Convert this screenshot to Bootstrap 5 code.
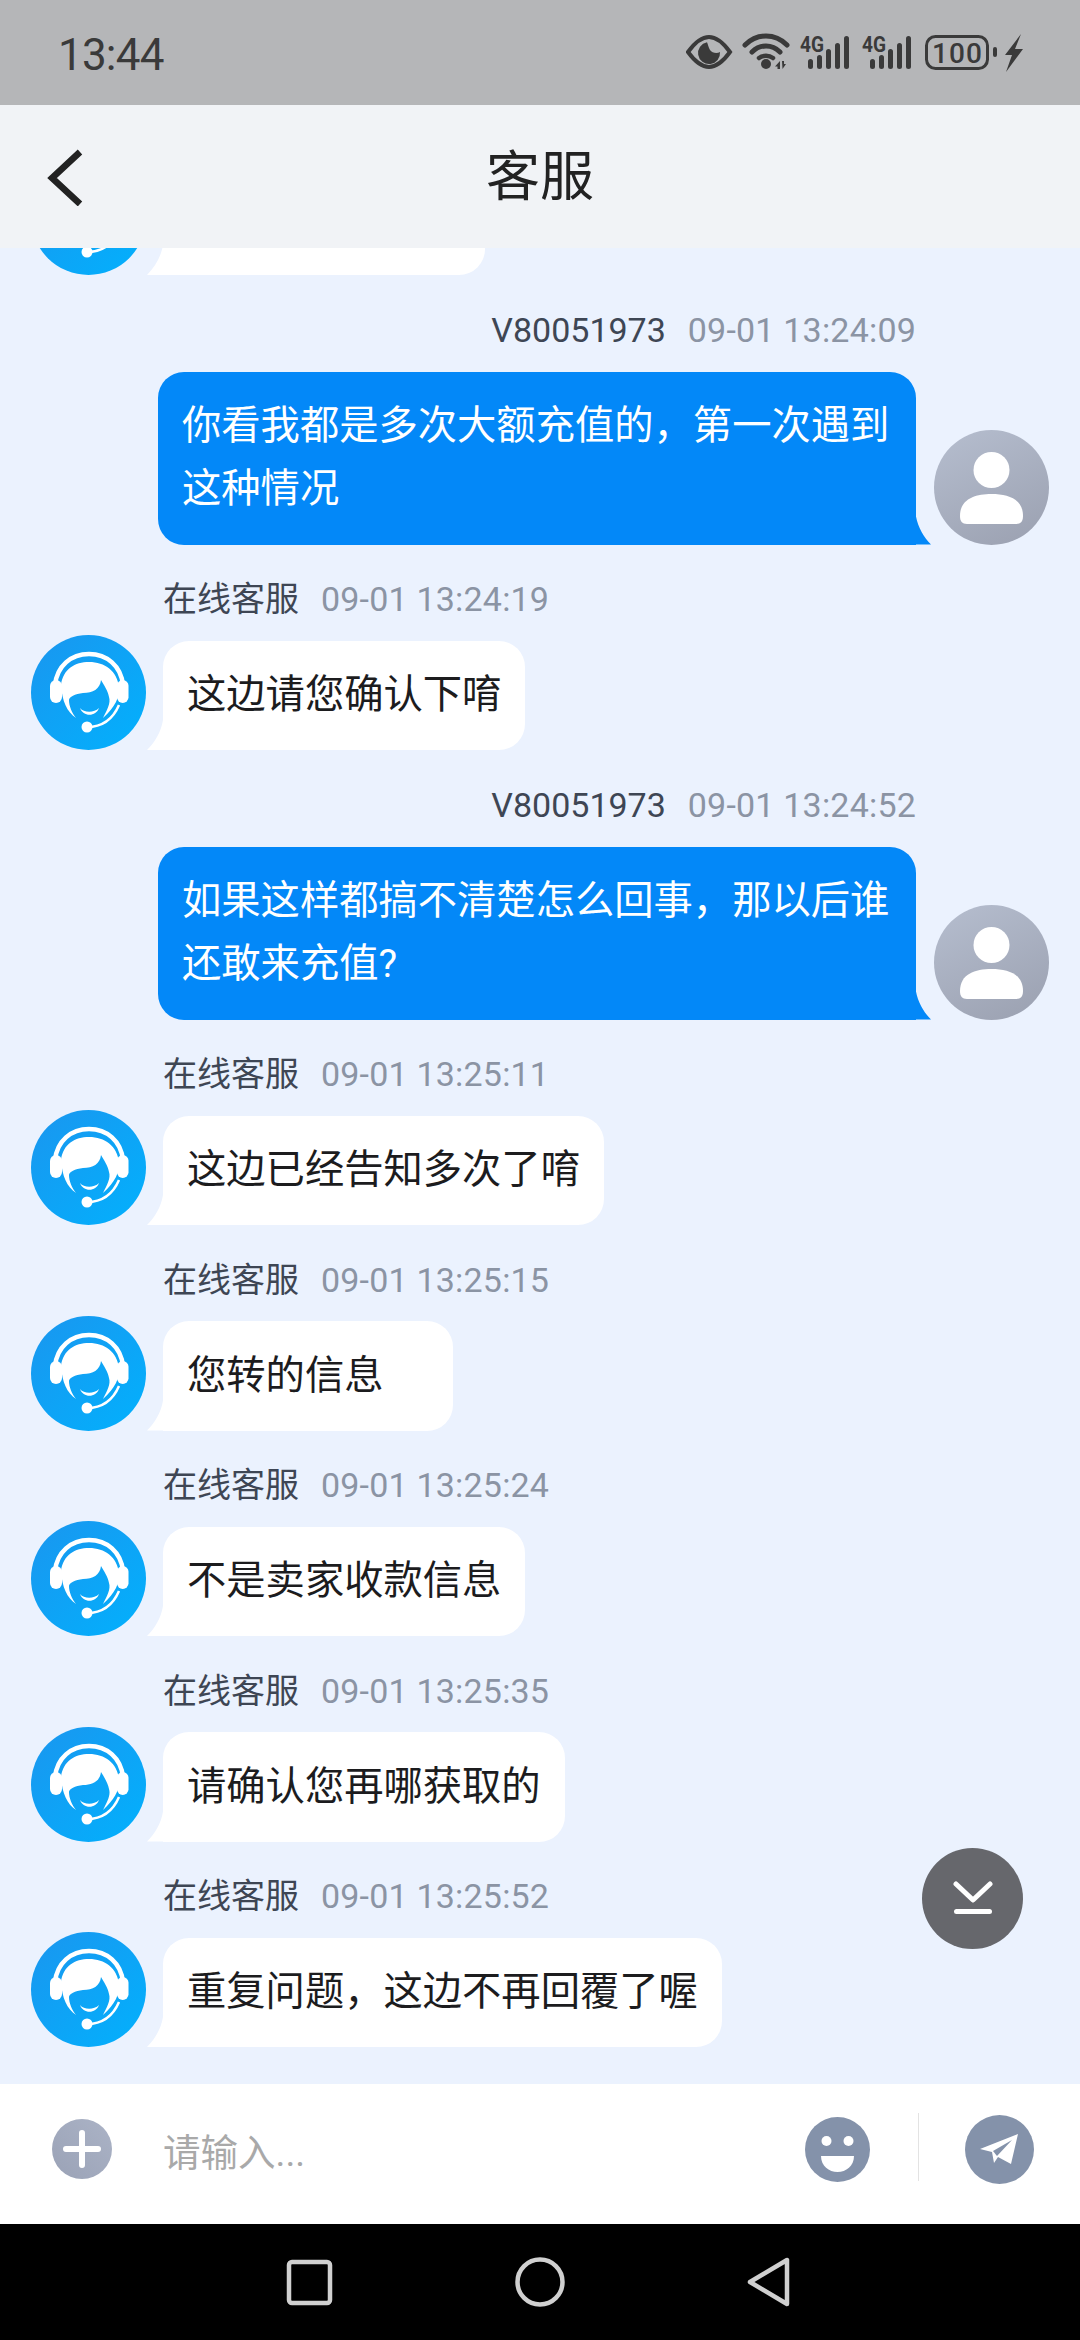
<!DOCTYPE html>
<html lang="zh">
<head>
<meta charset="utf-8">
<title>客服</title>
<link href="https://cdn.jsdelivr.net/npm/bootstrap@5.3.0/dist/css/bootstrap.min.css" rel="stylesheet">
<style>
:root{--cjk:Roboto,"Noto Sans CJK SC",sans-serif}
html,body{margin:0;padding:0}
body{width:1080px;height:2340px;overflow:hidden;font-family:var(--cjk);background:#ebf2fe}
.phone{width:1080px;height:2340px}
.sbar{height:105px;background:#b5b6b8;color:#3a3a3a;padding:0 54px 0 58px;flex:none}
.clock{font-size:44px;line-height:1;letter-spacing:-.8px;margin-top:4px}
.sicons{margin-top:1px}
.hdr{height:143px;background:#f1f3f6;flex:none;position:relative;z-index:2}
.hdr-title{font-size:54px;line-height:1;color:#222;font-weight:400;margin-top:2px}
.hdr-back{position:absolute;left:44px;top:41px}
.chat{flex:1 1 0;min-height:0;overflow:hidden;padding:0 31px 37px 31px;background:#ebf2fe}
.msgrow{margin-top:33.5px;flex:none}
.meta{font-size:34px;line-height:42px;height:42px;color:#3e4654;margin-bottom:15px;white-space:nowrap;padding-left:132px}
.meta .when{color:#8b94a4;margin-left:22px;letter-spacing:.2px}
.meta-out{text-align:right;padding-left:0;padding-right:133px;margin-bottom:21px}
.ava{width:115px;height:115px;flex:none;display:block}
.bub{font-size:39.3px;line-height:62.5px;position:relative;color:#1c1c1e;border-radius:26px;padding:23.5px 24px}
.bub-in{background:#fff;margin-left:17px;border-bottom-left-radius:0;white-space:nowrap}
.bub-in::before{content:"";position:absolute;left:-16px;bottom:0;width:16px;height:30px;background:#fff;clip-path:path("M16 0C14 12 8 22 0 30L16 30Z")}
.bub-gap{padding-right:70px}
.bub-clip{width:322px}
.bub-out{background:#0388f8;color:#fff;width:758px;margin-right:18px;border-bottom-right-radius:0;padding:23px 18px 24px 24px;line-height:63px}
.bub-out::after{content:"";position:absolute;right:-15px;bottom:0;width:15px;height:28px;background:#0388f8;clip-path:path("M0 0C2 11 8 21 15 28L0 28Z")}
.fab{position:absolute;right:57px;bottom:135px;width:101px;height:101px;border-radius:50%;background:#66676c;border:0;padding:0}
.composer{height:140px;background:#fff;flex:none;padding:0 46px 10px 52px}
.ph{font-size:37.5px;color:#a9a9a9;margin-left:51px;line-height:1;margin-top:10px}
.vsep{width:1px;height:68px;background:#e3e3e3;margin:-4px 46px 0 48px}
.navbarr{height:116px;background:#000;flex:none}
.navbarr svg{display:block}
</style>
</head>
<body>
<svg width="0" height="0" class="position-absolute">
  <defs>
    <linearGradient id="kfg" x1="0" y1="0" x2="1" y2="1"><stop offset="0" stop-color="#1a96ef"/><stop offset="1" stop-color="#02b1fd"/></linearGradient>
    <linearGradient id="ug" x1="0.2" y1="0" x2="0.7" y2="1"><stop offset="0" stop-color="#b4bccd"/><stop offset="1" stop-color="#9da3b3"/></linearGradient>
    <linearGradient id="pg" x1="1" y1="0" x2="0" y2="1"><stop offset="0" stop-color="#abb3c6"/><stop offset="1" stop-color="#9aa2b6"/></linearGradient>
    <symbol id="kf" viewBox="0 0 115 115">
      <circle cx="57.5" cy="57.5" r="57.5" fill="url(#kfg)"/>
      <path d="M24 50C26 31 40 19 58 19S90 31 92 50" fill="none" stroke="#fff" stroke-width="4.500"/>
      <rect x="19" y="45" width="12" height="23" rx="6" fill="#fff"/>
      <rect x="86" y="45" width="11.500" height="23" rx="5.750" fill="#fff"/>
      <path d="M30 50C32 34 44 27 58 27C74 27 86 36 88 52C89 62 84 72 72 83C76 75 80 68 78 62C77 56 73 50 70 45C69 54 62 58 52 58C44 59 38 62 38 65C38 71 41 78 45 83C36 77 31 66 30 50Z" fill="#fff"/>
      <path d="M49 73C53 78 63 78 68 73C65 82 52 82 49 73Z" fill="#fff"/>
      <path d="M56 92C72 92 82 84 88 70" fill="none" stroke="#fff" stroke-width="2.500"/>
      <circle cx="56" cy="92" r="5.500" fill="#fff"/>
    </symbol>
    <symbol id="me" viewBox="0 0 115 115">
      <circle cx="57.5" cy="57.5" r="57.5" fill="url(#ug)"/>
      <circle cx="57.500" cy="40" r="18" fill="#fff"/>
      <path d="M26 86C26 69 41 64 57.500 64S89 69 89 86C89 91 87 94 82 94H33C28 94 26 91 26 86Z" fill="#fff"/>
    </symbol>
  </defs>
</svg>

<div class="phone d-flex flex-column">
  <div class="sbar d-flex align-items-center justify-content-between">
    <span class="clock">13:44</span>
    <div class="sicons d-flex align-items-center">
      <svg width="340" height="40" viewBox="0 0 340 40" fill="#3a3a3a" font-family="Roboto,sans-serif" font-weight="700">
        <path d="M2 19C10 8 18 4 23 4S36 8 44 19C36 30 28 34 23 34S10 30 2 19Z" fill="none" stroke="#3a3a3a" stroke-width="4"/>
        <path d="M21 9.200A11 11 0 1 0 34 19C31 21 26 20 24 17C22.500 14.500 22 11 21 9.200Z"/>
        <path d="M59 12C71 0 89 0 101 12" fill="none" stroke="#3a3a3a" stroke-width="5" stroke-linecap="round"/>
        <path d="M66 19C74 11 86 11 94 19" fill="none" stroke="#3a3a3a" stroke-width="5" stroke-linecap="round"/>
        <path d="M73 25C77 22 83 22 87 25" fill="none" stroke="#3a3a3a" stroke-width="4.500" stroke-linecap="round"/>
        <circle cx="80" cy="31" r="5"/>
        <path d="M94 28L89 33.500H91.500V36H94ZM96 28H98V31H100L96.500 36Z"/>
        <text x="114" y="19" font-size="22" textLength="24" lengthAdjust="spacingAndGlyphs">4G</text>
        <rect x="122" y="26" width="5" height="10" rx="2.500"/><rect x="131" y="22" width="5" height="14" rx="2.500"/><rect x="140" y="16" width="5" height="20" rx="2.500"/><rect x="149" y="10" width="5" height="26" rx="2.500"/><rect x="158" y="3" width="5" height="33" rx="2.500"/>
        <text x="176" y="19" font-size="22" textLength="24" lengthAdjust="spacingAndGlyphs">4G</text>
        <rect x="184" y="26" width="5" height="10" rx="2.500"/><rect x="193" y="22" width="5" height="14" rx="2.500"/><rect x="202" y="16" width="5" height="20" rx="2.500"/><rect x="211" y="10" width="5" height="26" rx="2.500"/><rect x="220" y="3" width="5" height="33" rx="2.500"/>
        <rect x="240.500" y="3.500" width="61" height="32" rx="9" fill="none" stroke="#3a3a3a" stroke-width="3"/>
        <text x="271" y="29.500" font-size="28" font-weight="500" text-anchor="middle" textLength="50">100</text>
        <rect x="307" y="14" width="4" height="10" rx="2"/>
        <path d="M335 1L319 22H326L320 39L337 16H329Z"/>
      </svg>
    </div>
  </div>

  <div class="hdr d-flex align-items-center justify-content-center">
    <svg class="hdr-back" width="42" height="60" viewBox="0 0 42 60"><path d="M36 6L8 32L36 58" fill="none" stroke="#222" stroke-width="6.500"/></svg>
    <span class="hdr-title">客服</span>
  </div>

  <div class="chat position-relative d-flex flex-column justify-content-end">
    <div class="msgrow">
      <div class="d-flex align-items-end"><svg class="ava"><use href="#kf"/></svg><div class="bub bub-in bub-clip">&nbsp;</div></div></div>

    <div class="msgrow"><div class="meta meta-out">V80051973<span class="when">09-01 13:24:09</span></div>
      <div class="d-flex align-items-end justify-content-end"><div class="bub bub-out">你看我都是多次大额充值的，第一次遇到这种情况</div><svg class="ava"><use href="#me"/></svg></div></div>

    <div class="msgrow"><div class="meta">在线客服<span class="when">09-01 13:24:19</span></div>
      <div class="d-flex align-items-end"><svg class="ava"><use href="#kf"/></svg><div class="bub bub-in">这边请您确认下唷</div></div></div>

    <div class="msgrow"><div class="meta meta-out">V80051973<span class="when">09-01 13:24:52</span></div>
      <div class="d-flex align-items-end justify-content-end"><div class="bub bub-out">如果这样都搞不清楚怎么回事，那以后谁还敢来充值?</div><svg class="ava"><use href="#me"/></svg></div></div>

    <div class="msgrow"><div class="meta">在线客服<span class="when">09-01 13:25:11</span></div>
      <div class="d-flex align-items-end"><svg class="ava"><use href="#kf"/></svg><div class="bub bub-in">这边已经告知多次了唷</div></div></div>

    <div class="msgrow"><div class="meta">在线客服<span class="when">09-01 13:25:15</span></div>
      <div class="d-flex align-items-end"><svg class="ava"><use href="#kf"/></svg><div class="bub bub-in bub-gap">您转的信息</div></div></div>

    <div class="msgrow"><div class="meta">在线客服<span class="when">09-01 13:25:24</span></div>
      <div class="d-flex align-items-end"><svg class="ava"><use href="#kf"/></svg><div class="bub bub-in">不是卖家收款信息</div></div></div>

    <div class="msgrow"><div class="meta">在线客服<span class="when">09-01 13:25:35</span></div>
      <div class="d-flex align-items-end"><svg class="ava"><use href="#kf"/></svg><div class="bub bub-in">请确认您再哪获取的</div></div></div>

    <div class="msgrow"><div class="meta">在线客服<span class="when">09-01 13:25:52</span></div>
      <div class="d-flex align-items-end"><svg class="ava"><use href="#kf"/></svg><div class="bub bub-in">重复问题，这边不再回覆了喔</div></div></div>

    <button class="fab d-flex align-items-center justify-content-center" type="button" aria-label="到底部">
      <svg width="42" height="36" viewBox="0 0 42 36"><path d="M4 3L21 19L38 3" fill="none" stroke="#fff" stroke-width="5" stroke-linecap="round" stroke-linejoin="round"/><rect x="2" y="28" width="38" height="5" rx="2.500" fill="#fff"/></svg>
    </button>
  </div>

  <div class="composer d-flex align-items-center">
    <svg width="60" height="60" viewBox="0 0 60 60"><circle cx="30" cy="30" r="30" fill="url(#pg)"/><path d="M30 14V46M14 30H46" stroke="#fff" stroke-width="6" stroke-linecap="round"/></svg>
    <span class="ph flex-grow-1">请输入...</span>
    <svg width="65" height="65" viewBox="0 0 65 65"><circle cx="32.500" cy="32.500" r="32.500" fill="#8492aa"/><circle cx="21.500" cy="24" r="5" fill="#fff"/><circle cx="43.500" cy="24" r="5" fill="#fff"/><path d="M16 39H49C49 49 41 55 32.500 55S16 49 16 39Z" fill="#fff"/></svg>
    <div class="vsep"></div>
    <svg width="69" height="69" viewBox="0 0 69 69"><circle cx="34.500" cy="34.500" r="34.500" fill="#8492aa"/><path d="M15 34L53 19L46 49L33 42L29 48L27 37Z" fill="#fff"/><path d="M28 36L47 25L32 41Z" fill="#8492aa"/></svg>
  </div>

  <div class="navbarr d-flex justify-content-center">
    <svg width="1080" height="116" viewBox="0 0 1080 116" fill="none" stroke="#d0d0d0" stroke-width="4.500" stroke-linejoin="round">
      <rect x="289" y="38" width="41" height="41" rx="3"/>
      <circle cx="540" cy="58" r="22.500"/>
      <path d="M787 36V80L750 58Z"/>
    </svg>
  </div>
</div>
</body>
</html>
